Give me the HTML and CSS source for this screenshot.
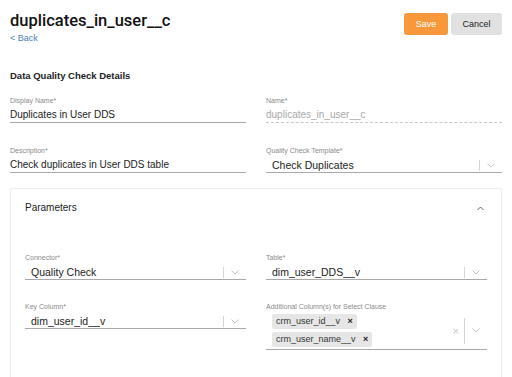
FILE: index.html
```html
<!DOCTYPE html>
<html lang="en">
<head>
  <meta charset="utf-8">
  <link rel="stylesheet" href="styles.css">
</head>
<body>
  <div class="page-header">
    <div>
      <h1 class="page-title">duplicates_in_user__c</h1>
      <a class="back-link" href="#">&lt; Back</a>
    </div>
    <div class="actions">
      <button class="btn btn-save">Save</button>
      <button class="btn btn-cancel">Cancel</button>
    </div>
  </div>

  <h2 class="section-title">Data Quality Check Details</h2>

  <div class="form-grid">
    <div class="field">
      <label>Display Name*</label>
      <div class="control">Duplicates in User DDS</div>
    </div>
    <div class="field">
      <label>Name*</label>
      <div class="control control-disabled">duplicates_in_user__c</div>
    </div>
    <div class="field">
      <label>Description*</label>
      <div class="control">Check duplicates in User DDS table</div>
    </div>
    <div class="field">
      <label>Quality Check Template*</label>
      <div class="control select">
        <span class="select-value">Check Duplicates</span>
        <span class="indicators">
          <span class="sep"></span>
          <svg class="chevron" width="8" height="5" viewBox="0 0 8 5"><path d="M0.5 0.5 L4 4 L7.5 0.5" fill="none" stroke="#c4c4c4" stroke-width="1"/></svg>
        </span>
      </div>
    </div>
  </div>

  <div class="card">
    <div class="card-header">
      <span>Parameters</span>
      <svg class="chevron-up" width="7" height="5" viewBox="0 0 7 5"><path d="M0.5 4 L3.5 1 L6.5 4" fill="none" stroke="#666" stroke-width="1"/></svg>
    </div>
    <div class="form-grid card-grid">
      <div class="field">
        <label>Connector*</label>
        <div class="control select">
          <span class="select-value">Quality Check</span>
          <span class="indicators">
            <span class="sep"></span>
            <svg class="chevron" width="8" height="5" viewBox="0 0 8 5"><path d="M0.5 0.5 L4 4 L7.5 0.5" fill="none" stroke="#c4c4c4" stroke-width="1"/></svg>
          </span>
        </div>
      </div>
      <div class="field">
        <label>Table*</label>
        <div class="control select">
          <span class="select-value">dim_user_DDS__v</span>
          <span class="indicators">
            <span class="sep"></span>
            <svg class="chevron" width="8" height="5" viewBox="0 0 8 5"><path d="M0.5 0.5 L4 4 L7.5 0.5" fill="none" stroke="#c4c4c4" stroke-width="1"/></svg>
          </span>
        </div>
      </div>
      <div class="field">
        <label>Key Column*</label>
        <div class="control select">
          <span class="select-value">dim_user_id__v</span>
          <span class="indicators">
            <span class="sep"></span>
            <svg class="chevron" width="8" height="5" viewBox="0 0 8 5"><path d="M0.5 0.5 L4 4 L7.5 0.5" fill="none" stroke="#c4c4c4" stroke-width="1"/></svg>
          </span>
        </div>
      </div>
      <div class="field">
        <label>Additional Column(s) for Select Clause</label>
        <div class="control select multi">
          <div class="chips">
            <span class="chip">crm_user_id__v <b>&times;</b></span>
            <span class="chip">crm_user_name__v <b>&times;</b></span>
          </div>
          <span class="indicators">
            <span class="clear">&times;</span>
            <span class="sep sep-tall"></span>
            <svg class="chevron" width="8" height="5" viewBox="0 0 8 5"><path d="M0.5 0.5 L4 4 L7.5 0.5" fill="none" stroke="#c4c4c4" stroke-width="1"/></svg>
          </span>
        </div>
      </div>
    </div>
  </div>
</body>
</html>
```

FILE: styles.css
```css
body {
  margin: 0;
  padding: 10px 10px 0;
  font-family: "Liberation Sans", Arial, sans-serif;
  color: #222;
  background: #fff;
}

.page-header {
  display: flex;
  justify-content: space-between;
  align-items: flex-start;
}

.page-title {
  margin: 0;
  font-family: Roboto, "Liberation Sans", sans-serif;
  font-size: 16.5px;
  font-weight: 500;
  line-height: 22px;
  color: #111;
}

.back-link {
  display: block;
  font-size: 9px;
  line-height: 12px;
  color: #4a82b8;
  text-decoration: none;
}

.actions {
  display: flex;
  gap: 3px;
  margin-top: 3px;
}

.btn {
  height: 22px;
  border: none;
  border-radius: 3px;
  font-family: "Liberation Sans", Arial, sans-serif;
  font-size: 9px;
  padding: 0;
}

.btn-save {
  width: 44px;
  background: #f7993b;
  color: #fff;
}

.btn-cancel {
  width: 51px;
  background: #e1e1e1;
  color: #222;
}

.section-title {
  margin: 26px 0 0;
  font-size: 9.5px;
  line-height: 12px;
  font-weight: bold;
  color: #222;
}

.form-grid {
  display: grid;
  grid-template-columns: 1fr 1fr;
  column-gap: 20px;
  row-gap: 23px;
  align-items: start;
  margin-top: 14px;
}

.field label {
  display: block;
  font-size: 7px;
  line-height: 9px;
  color: #8a8a8a;
  margin-bottom: 3px;
}

.control {
  height: 14px;
  font-size: 10px;
  line-height: 14px;
  color: #222;
  border-bottom: 1px solid #a9a9a9;
}

.control-disabled {
  color: #a8a8a8;
  border-bottom: 1px dashed #c8c8c8;
}

.select {
  display: flex;
  align-items: center;
  padding-left: 6px;
  font-size: 10.5px;
}

.select-value {
  flex: 1;
}

.indicators {
  display: flex;
  align-items: center;
  height: 100%;
}

.sep {
  width: 1px;
  height: 11px;
  background: #d4d4d4;
  margin-right: 7px;
}

.chevron {
  margin-right: 7px;
}

.card {
  margin-top: 15px;
  border: 1px solid #eee;
  border-radius: 3px;
  box-shadow: 0 0 2px rgba(0, 0, 0, 0.06);
  padding: 13px 14px 40px;
}

.card-header {
  display: flex;
  justify-content: space-between;
  align-items: center;
  font-size: 10px;
  line-height: 12px;
  color: #222;
}

.chevron-up {
  margin-right: 3px;
}

.card-grid {
  margin-top: 39px;
  row-gap: 22px;
}

.multi {
  height: auto;
  padding-bottom: 2px;
}

.chips {
  flex: 1;
  display: flex;
  flex-direction: column;
  align-items: flex-start;
  gap: 3px;
}

.chip {
  display: inline-block;
  background: #e6e6e6;
  border-radius: 2px;
  font-size: 9px;
  line-height: 15px;
  padding: 0 4px;
  color: #333;
}

.chip b {
  font-size: 9px;
  margin-left: 5px;
  color: #222;
}

.clear {
  font-size: 11px;
  color: #c6c6c6;
  margin-right: 5px;
}

.sep-tall {
  height: 26px;
}
```
